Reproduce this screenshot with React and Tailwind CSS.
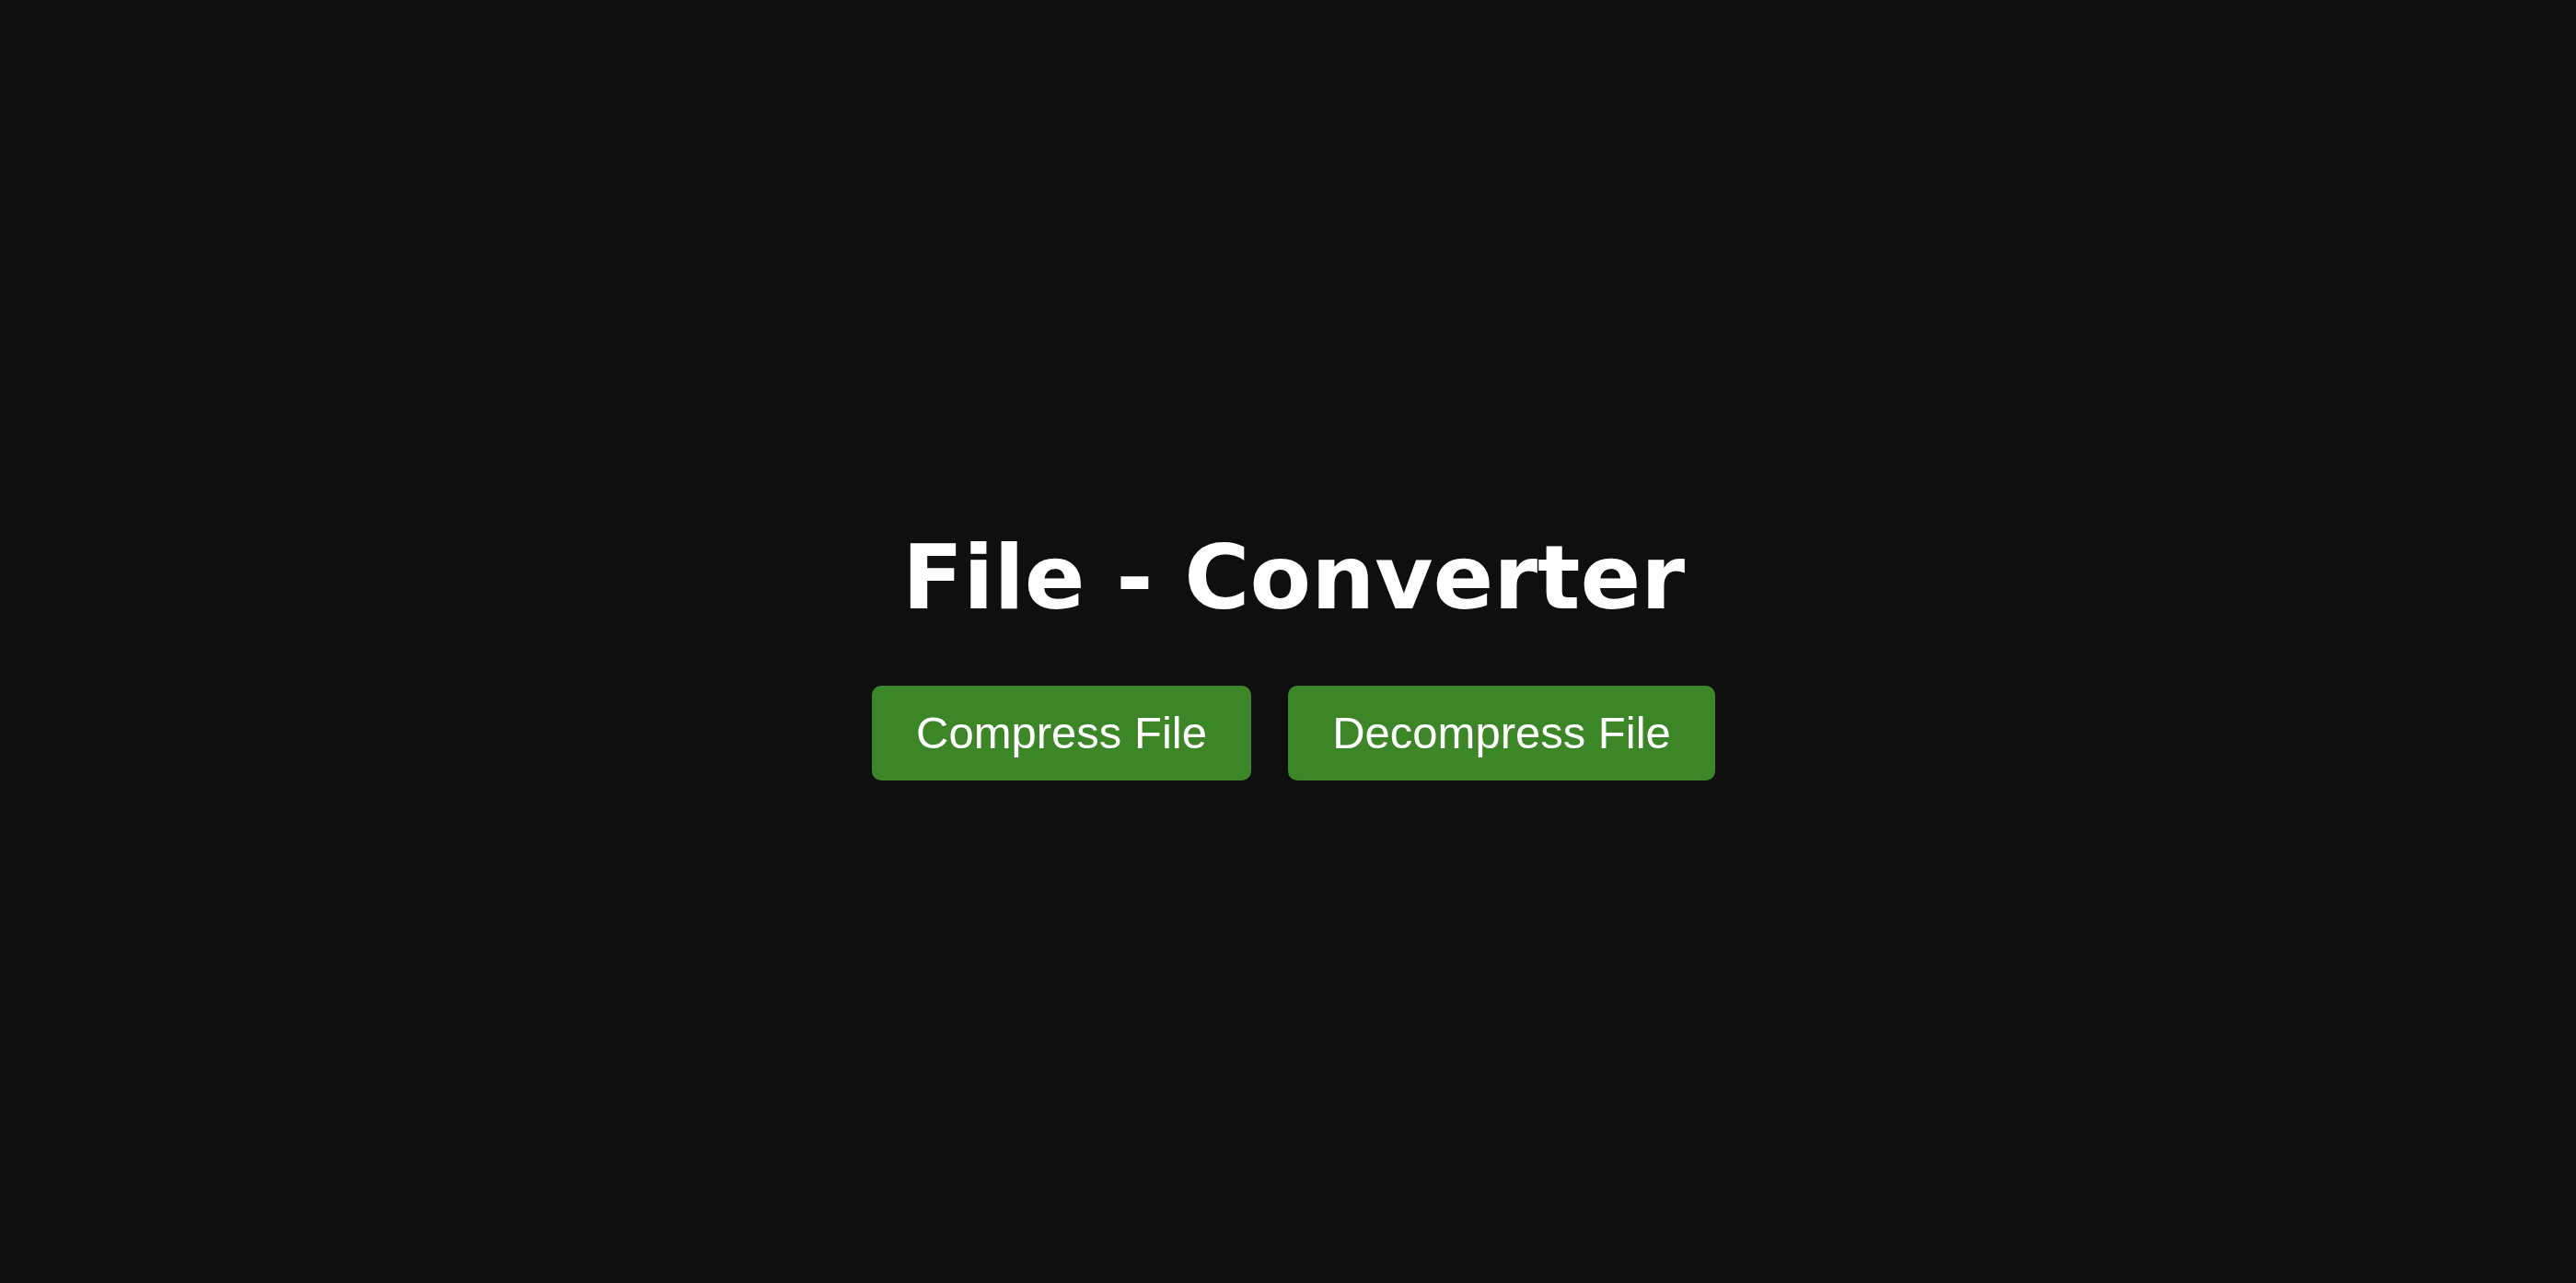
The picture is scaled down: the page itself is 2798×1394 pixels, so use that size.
import React from "react";

const App = () => {
  return (
    <div className="min-h-screen w-full bg-[#0f0f0f] flex flex-col items-center justify-center pt-[26px] pl-[12px]">
      <h1 className="text-white font-bold text-[97px] leading-[112px] font-['DejaVu_Sans',sans-serif]">
        File - Converter
      </h1>
      <div className="mt-[61px] flex gap-[40px] font-['Liberation_Sans',Arial,sans-serif]">
        <button className="h-[103px] w-[412px] rounded-[10px] bg-[#3c8628] text-white text-[49px]">
          Compress File
        </button>
        <button className="h-[103px] w-[464px] rounded-[10px] bg-[#3c8628] text-white text-[49px]">
          Decompress File
        </button>
      </div>
    </div>
  );
};

export default App;
